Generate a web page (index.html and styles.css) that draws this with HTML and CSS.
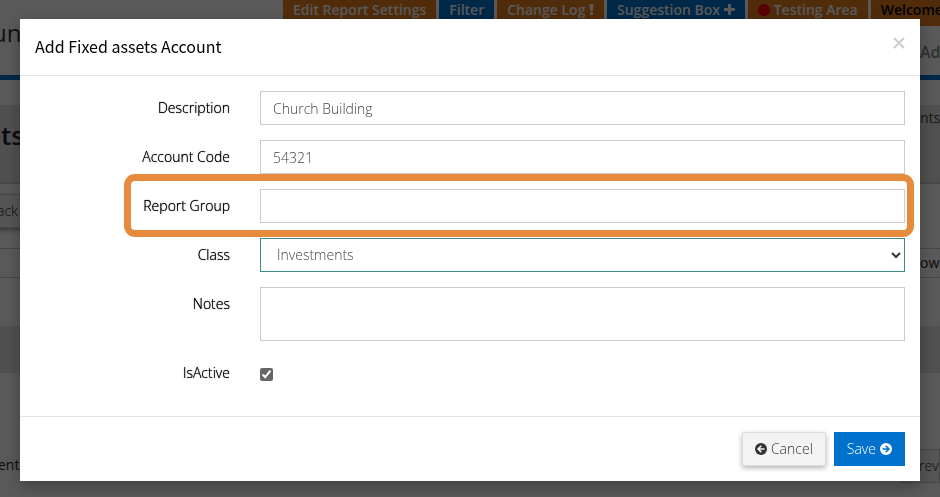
FILE: index.html
```
<!DOCTYPE html>
<html lang="en">
<head>
    <meta charset="UTF-8">
    <meta name="viewport" content="width=device-width, initial-scale=1.0">
    <title>Add Fixed assets Account</title>
    <link rel="stylesheet" href="styles.css">
</head>
<body>

    <div class="page">
        <nav class="topbar">
            <a href="#" class="tab orange">Edit Report Settings</a>
            <a href="#" class="tab blue">Filter</a>
            <a href="#" class="tab orange">Change Log
                <svg width="5" height="11" viewBox="0 0 5 11"><path d="M0.5 0h4l-.6 7h-2.8zM1 8h3v3h-3z" fill="currentColor"/></svg></a>
            <a href="#" class="tab blue">Suggestion Box
                <svg width="11" height="11" viewBox="0 0 11 11"><path d="M4 0h3v4h4v3h-4v4h-3v-4h-4v-3h4z" fill="currentColor"/></svg></a>
            <a href="#" class="tab orange"><span class="dot"></span>Testing Area</a>
            <a href="#" class="tab orange user">Welcome</a>
        </nav>
        <header class="brand">
            <a href="#" class="logo">un</a>
            <a href="#" class="account">Ad</a>
        </header>
        <div class="heading">
            <h1>ets</h1>
            <span class="crumb">nts</span>
        </div>
        <div class="toolbar">
            <button type="button" class="back">ack</button>
        </div>
        <div class="search"><span>ow</span></div>
        <div class="band"></div>
        <div class="table-foot">
            <span>ent</span>
            <button type="button" class="prev">rev</button>
        </div>
    </div>

    <div class="overlay">
        <form class="modal" role="dialog" aria-labelledby="modalTitle">
            <div class="modal-header">
                <h2 id="modalTitle">Add Fixed assets Account</h2>
                <button type="button" class="close" aria-label="Close">
                    <svg width="12" height="12" viewBox="0 0 12 12"><path d="M1 1l10 10M11 1l-10 10" stroke="currentColor" stroke-width="2" fill="none"/></svg>
                </button>
            </div>

            <div class="modal-body">
                <div class="row">
                    <label for="description">Description</label>
                    <input type="text" id="description" value="Church Building">
                </div>
                <div class="row">
                    <label for="accountCode">Account Code</label>
                    <input type="text" id="accountCode" value="54321">
                </div>
                <div class="row highlight">
                    <label for="reportGroup">Report Group</label>
                    <input type="text" id="reportGroup">
                </div>
                <div class="row">
                    <label for="class">Class</label>
                    <div class="select">
                        <select id="class">
                            <option>Investments</option>
                        </select>
                        <svg width="10" height="7" viewBox="0 0 10 7"><path d="M1 1l4 4 4-4" stroke="currentColor" stroke-width="2" fill="none"/></svg>
                    </div>
                </div>
                <div class="row">
                    <label for="notes">Notes</label>
                    <textarea id="notes"></textarea>
                </div>
                <div class="row">
                    <label for="isActive">IsActive</label>
                    <input type="checkbox" id="isActive" checked>
                </div>
            </div>

            <div class="modal-footer">
                <button type="button" class="btn cancel">
                    <svg width="12" height="12" viewBox="0 0 12 12"><circle cx="6" cy="6" r="6" fill="currentColor"/><path d="M9.5 6h-6M6.3 2.8l-3.2 3.2 3.2 3.2" stroke="#f3f3f3" stroke-width="1.6" fill="none"/></svg>
                    Cancel
                </button>
                <button type="submit" class="btn save">
                    Save
                    <svg width="12" height="12" viewBox="0 0 12 12"><circle cx="6" cy="6" r="6" fill="currentColor"/><path d="M2.5 6h6M5.7 2.8l3.2 3.2-3.2 3.2" stroke="#0072ce" stroke-width="1.6" fill="none"/></svg>
                </button>
            </div>
        </form>
    </div>

</body>
</html>
```
FILE: styles.css
```
* {
    box-sizing: border-box;
}
body {
    margin: 0;
    font-family: "Open Sans", sans-serif;
    font-size: 14px;
    line-height: 20px;
    color: #222;
    background: #fff;
}
h1, h2 {
    margin: 0;
}
a {
    color: inherit;
    text-decoration: none;
}

/* page behind the dialog */
.page {
    height: 100vh;
    overflow: hidden;
}
.topbar {
    display: flex;
    gap: 3px;
    height: 26px;
    padding-left: 283px;
    white-space: nowrap;
}
.tab {
    padding: 0 10px;
    font-weight: 600;
    color: #fff;
}
.orange {
    background: #e67e22;
}
.blue {
    background: #0072ce;
}
.user {
    flex: 1;
    padding-right: 0;
    color: #000;
}
.dot {
    display: inline-block;
    width: 12px;
    height: 12px;
    margin-right: 4px;
    border-radius: 50%;
    background: #f00;
    vertical-align: -1px;
}
.brand {
    display: flex;
    justify-content: space-between;
    height: 54px;
    border-bottom: 5px solid #0072ce;
}
.logo {
    margin-left: -8px;
    font-size: 24px;
    line-height: 14px;
    color: #334;
}
.account {
    width: 20px;
    padding-top: 16px;
    font-size: 16px;
    font-weight: 600;
    color: #888;
}
.heading {
    display: flex;
    justify-content: space-between;
    margin-top: 25px;
    height: 79px;
    background: #e4e4e4;
    border-bottom: 2px solid #ccc;
}
.heading h1 {
    margin-left: -14px;
    font-size: 26px;
    font-weight: 600;
    line-height: 60px;
}
.crumb {
    width: 20px;
    padding-top: 3px;
    color: #444;
}
.toolbar {
    padding-top: 10px;
    height: 64px;
}
.back, .prev {
    height: 34px;
    border: 1px solid #ccc;
    background: #f3f3f3;
    font: inherit;
    font-weight: 300;
    color: #222;
}
.back {
    width: 40px;
    margin-left: -4px;
    padding: 0;
    text-align: left;
    box-shadow: 0 2px 5px #999;
}
.search {
    display: flex;
    justify-content: flex-end;
    height: 30px;
    border: 1px solid #ccc;
    border-width: 1px 0;
}
.search span {
    width: 20px;
    padding-top: 4px;
    background: #fff;
}
.band {
    margin-top: 48px;
    height: 47px;
    background: #e4e4e4;
}
.table-foot {
    display: flex;
    justify-content: space-between;
    margin: 76px 0 0 -2px;
    line-height: 32px;
}
.prev {
    width: 40px;
    padding: 0 0 0 18px;
    text-align: left;
}

/* dialog */
.overlay {
    position: fixed;
    inset: 0;
    padding: 19px 20px;
    background: rgba(0, 0, 0, 0.65);
}
.modal {
    background: #fff;
    box-shadow: 0 5px 15px rgba(0, 0, 0, 0.3);
}
.modal-header {
    display: flex;
    justify-content: space-between;
    align-items: flex-start;
    padding: 15px;
    height: 57px;
    border-bottom: 1px solid #e5e5e5;
}
.modal-header h2 {
    font-family: "Noto Sans CJK SC", sans-serif;
    font-size: 16px;
    font-weight: 400;
    line-height: 24px;
    color: #000;
}
.close {
    padding: 3px 0;
    border: none;
    background: none;
    color: #ccc;
    line-height: 10px;
}
.modal-body {
    display: flex;
    flex-direction: column;
    gap: 15px;
    padding: 15px;
    height: 341px;
    border-bottom: 1px solid #e5e5e5;
}
.row {
    display: grid;
    grid-template-columns: 195px 1fr;
    column-gap: 30px;
    align-items: start;
}
.row label {
    padding-top: 7px;
    text-align: right;
    font-weight: 300;
    color: #000;
    text-shadow: 0 0 1px #000;
}
.row input[type="text"], .row select, .row textarea {
    display: block;
    width: 100%;
    height: 34px;
    padding: 6px 12px;
    border: 1px solid #ccc;
    border-radius: 0;
    background: #fff;
    font: inherit;
    font-weight: 300;
    color: #444;
}
.row textarea {
    height: 54px;
    resize: none;
}
.select {
    display: grid;
    align-items: center;
}
.select select, .select svg {
    grid-area: 1 / 1;
}
.row .select select {
    padding-left: 16px;
    border-color: #3c8d8d;
    appearance: none;
}
.select svg {
    justify-self: end;
    margin-right: 4px;
    color: #333;
    pointer-events: none;
}
.row input[type="checkbox"] {
    width: 13px;
    height: 13px;
    margin: 12px 0 0;
    accent-color: #666;
}
/* orange ring around the row */
.highlight {
    position: relative;
}
.highlight::after {
    content: "";
    position: absolute;
    inset: -15px -9px -14px 89px;
    border: 7px solid #e68a3c;
    border-radius: 11px;
    pointer-events: none;
}
.modal-footer {
    display: flex;
    justify-content: flex-end;
    gap: 8px;
    padding: 15px;
}
.btn {
    display: flex;
    align-items: center;
    gap: 4px;
    height: 34px;
    padding: 0 12px;
    border: 1px solid #ddd;
    background: #f3f3f3;
    font: inherit;
    font-weight: 300;
    color: #333;
    cursor: pointer;
}
.cancel {
    border-radius: 2px;
    box-shadow: 0 2px 5px rgba(0, 0, 0, 0.3);
}
.save {
    border-color: #0072ce;
    background: #0072ce;
    color: #fff;
}
```
